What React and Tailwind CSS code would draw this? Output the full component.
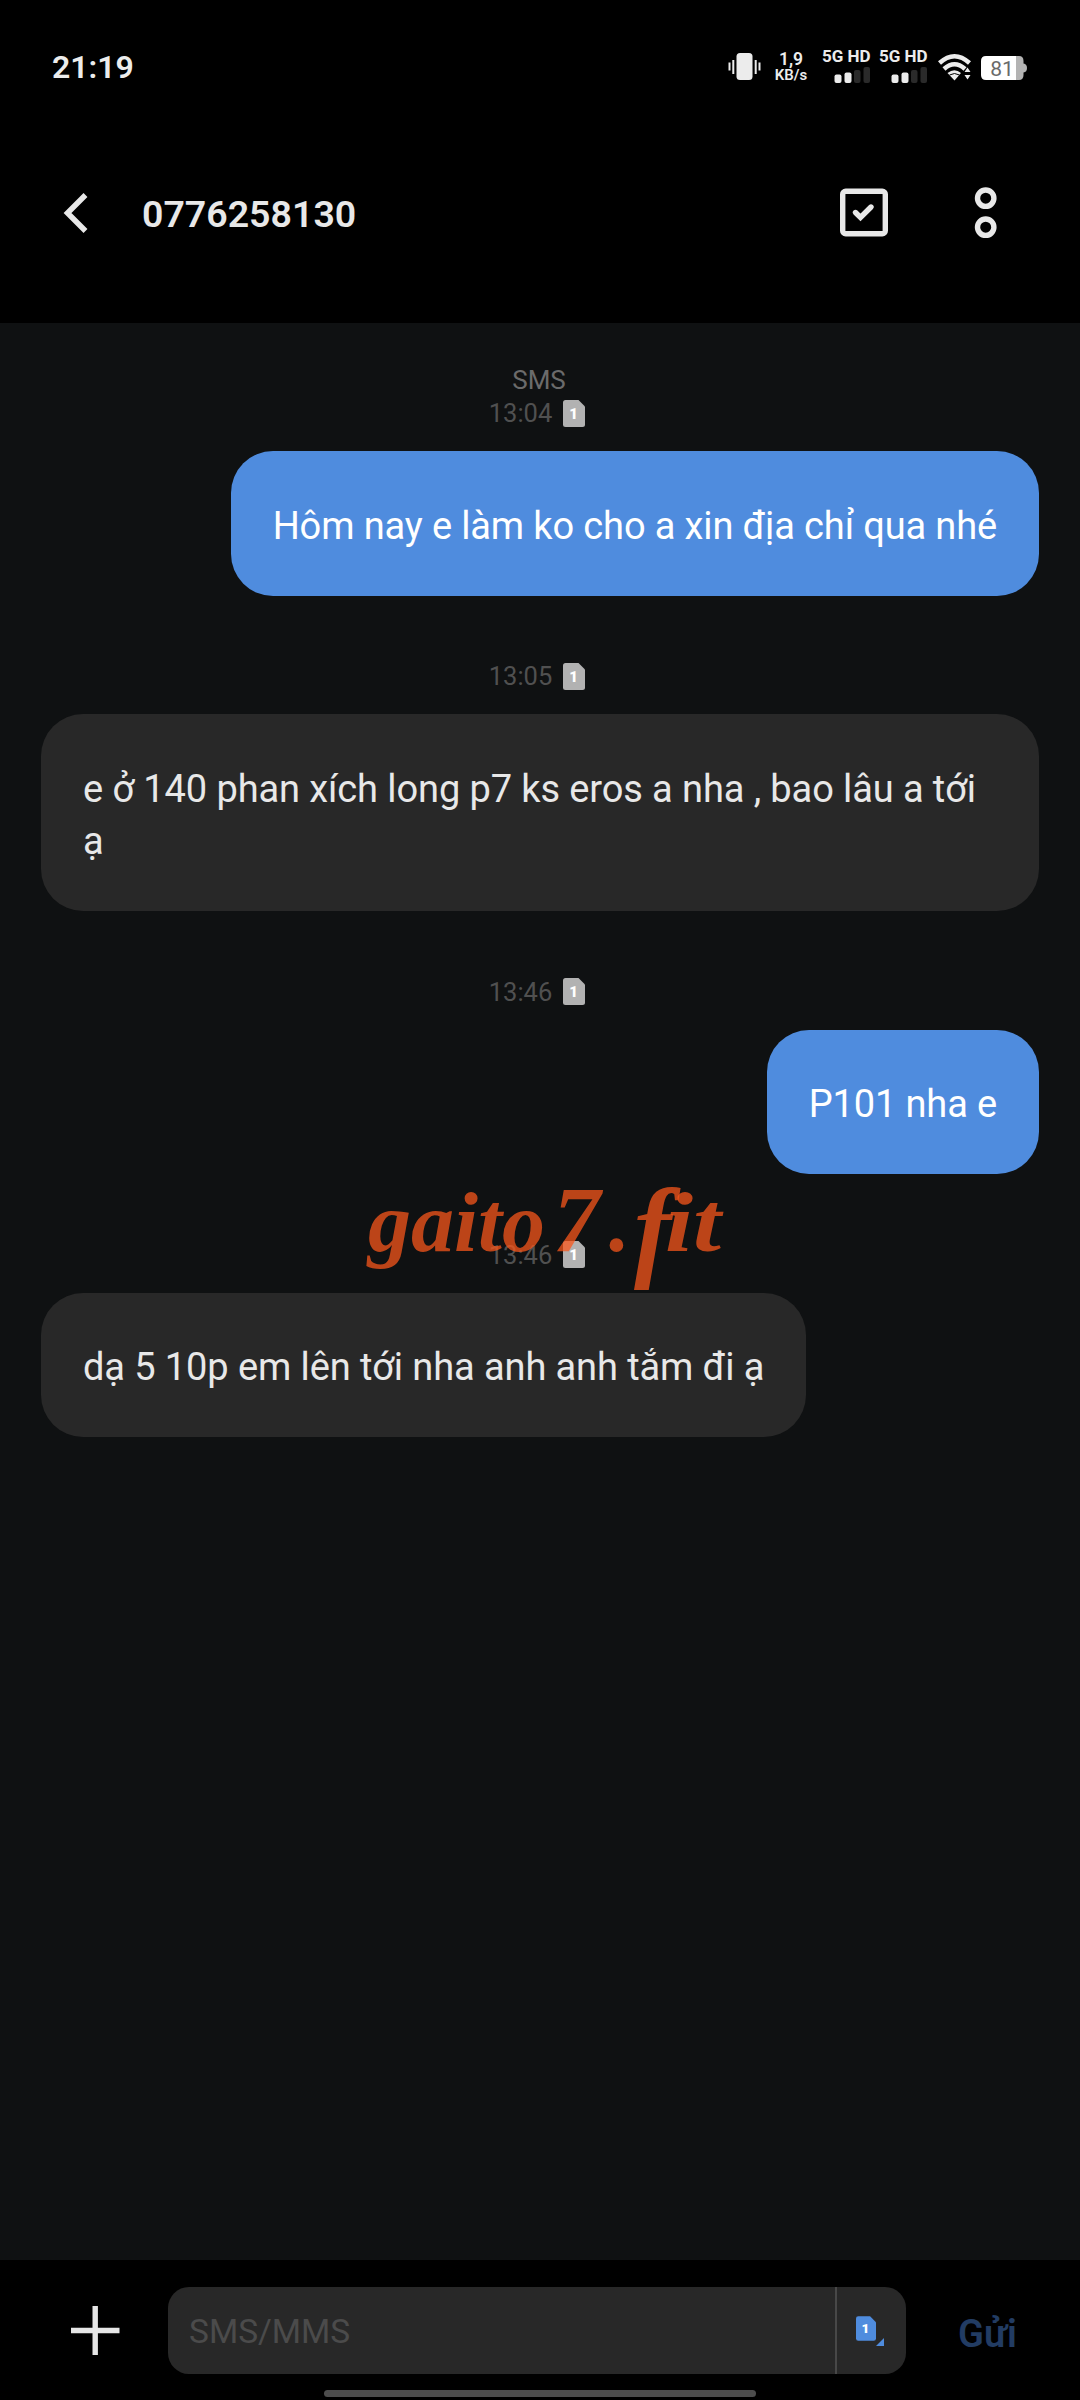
import React from 'react';

const messages = [
  { time: '13:04', label: 'SMS', sent: true, text: 'Hôm nay e làm ko cho a xin địa chỉ qua nhé' },
  { time: '13:05', sent: false, text: 'e ở 140 phan xích long p7 ks eros a nha , bao lâu a tới ạ' },
  { time: '13:46', sent: true, text: 'P101 nha e' },
  { time: '13:46', sent: false, text: 'dạ 5 10p em lên tới nha anh anh tắm đi ạ' },
];

const SimIcon = ({ className }) => (
  <svg viewBox="0 0 22 27" className={className}>
    <path d="M2.5 0H15.5L22 6.5V24.5Q22 27 19.5 27H2.5Q0 27 0 24.5V2.5Q0 0 2.5 0Z" fill="currentColor" />
    <text x="10.5" y="19" fontSize="15" fontWeight="900" textAnchor="middle" fill="#fff">1</text>
  </svg>
);

const Signal = () => (
  <div className="flex w-[49px] flex-col">
    <span className="whitespace-nowrap text-[17px] leading-[20px] font-bold">5G HD</span>
    <svg viewBox="0 0 49 18" className="h-[18px] w-[49px]">
      <rect x="12.5" y="8.5" width="7" height="8.5" rx="2" fill="#ececec" />
      <rect x="22.5" y="6.5" width="7" height="10.5" rx="2" fill="#ececec" />
      <rect x="32" y="4" width="6.5" height="13" rx="2" fill="#2a2a2a" />
      <rect x="41.5" y="1" width="6.5" height="16" rx="2" fill="#2a2a2a" />
    </svg>
  </div>
);

const StatusBar = () => (
  <div className="flex h-[120px] items-start pl-[52px] text-[#ececec]">
    <span className="mt-[48px] text-[32px] leading-[38px] font-semibold">21:19</span>
    <div className="ml-auto flex h-[120px] w-[352px] items-start pt-[46px]">
      <svg viewBox="0 0 34 30" className="mt-[6px] h-[30px] w-[34px]">
        <rect x="8.5" y="1" width="16" height="27" rx="3.5" fill="#ececec" />
        <path d="M1.5 10.5V18.5M5.3 8V22M27.7 8V22M31.5 10.5V18.5" stroke="#ececec" strokeWidth="2" />
      </svg>
      <div className="ml-[11px] flex w-[36px] flex-col items-center font-semibold">
        <span className="mt-[4px] text-[17.5px] leading-[18px]">1,9</span>
        <span className="text-[15px] leading-[15px]">KB/s</span>
      </div>
      <div className="ml-[13px] flex gap-[8px]">
        <Signal />
        <Signal />
      </div>
      <svg viewBox="0 0 34 28" className="ml-[10px] mt-[7px] h-[28px] w-[34px]">
        <path d="M1.5 10Q16.5 -3.5 31.5 10" fill="none" stroke="#ececec" strokeWidth="4.5" />
        <path d="M6 16Q16.5 6.5 27 16" fill="none" stroke="#ececec" strokeWidth="4.5" />
        <path d="M9.5 20Q16.5 14.5 23 20L16.5 27.5Z" fill="#ececec" />
        <path d="M11.5 22Q16.5 19 21.5 22" fill="none" stroke="#000" strokeWidth="1" />
        <path d="M26.5 19L29.5 14.5L32.5 19ZM26.5 22L29.5 26.5L32.5 22Z" fill="#ececec" />
      </svg>
      <svg viewBox="0 0 48 26" className="ml-[8px] mt-[9px] h-[26px] w-[48px]">
        <path d="M36 1H39Q43.5 1 43.5 6V8.5Q47 9 47 13Q47 17 43.5 17.5V20Q43.5 25 39 25H36Z" fill="#b3b3b3" />
        <path d="M6 1H36V25H6Q1 25 1 20V6Q1 1 6 1Z" fill="#fff" />
        <text x="22" y="20.5" fontSize="21" textAnchor="middle" fill="#6a6a6a">81</text>
      </svg>
    </div>
  </div>
);

const Header = () => (
  <div className="flex h-[203px] items-start text-[#e8e8e8]">
    <svg viewBox="0 0 30 46" className="ml-[62px] mt-[70px] h-[46px] w-[30px]">
      <path d="M23.5 5L5.5 23L23.5 41" fill="none" stroke="currentColor" strokeWidth="5.5" />
    </svg>
    <h1 className="ml-[50px] mt-[71px] text-[37.5px] leading-[46px] font-semibold">0776258130</h1>
    <svg viewBox="0 0 50 50" className="ml-auto mt-[68px] h-[50px] w-[50px]">
      <rect x="3.7" y="3.2" width="42.6" height="42.6" rx="3" fill="none" stroke="currentColor" strokeWidth="5.4" />
      <path d="M16.5 24.5L21.5 29.5L32 19" fill="none" stroke="currentColor" strokeWidth="5.4" strokeLinecap="round" />
    </svg>
    <svg viewBox="0 0 24 54" className="ml-[85px] mr-[82px] mt-[66px] h-[54px] w-[24px]">
      <circle cx="11.7" cy="12.2" r="8.2" fill="none" stroke="currentColor" strokeWidth="5.4" />
      <circle cx="11.7" cy="41.2" r="8.2" fill="none" stroke="currentColor" strokeWidth="5.4" />
    </svg>
  </div>
);

const Message = ({ message }) => (
  <div className="flex flex-col">
    {message.label && (
      <div className="-mt-[33px] mb-[-1px] pr-[2px] text-center text-[26px] leading-[34px] text-[#6b6b6b]">{message.label}</div>
    )}
    <div className="mb-[21px] flex h-[34px] items-center justify-center gap-[11px] pr-[6px]">
      <span className="text-[25.5px] leading-[34px] text-[#505050]">{message.time}</span>
      <SimIcon className="h-[27px] w-[22px] text-[#b2b2b2]" />
    </div>
    <div
      className={
        message.sent
          ? 'max-w-[998px] self-end rounded-[42px] bg-[#4f8cde] px-[42px] pb-[43.5px] pt-[48.5px] text-[38px] leading-[52.5px] tracking-[-0.13px] text-white'
          : 'max-w-[998px] self-start rounded-[42px] bg-[#282828] px-[42px] pb-[43.5px] pt-[48.5px] text-[38px] leading-[52.5px] tracking-[-0.1px] text-[#e8e8e8]'
      }
    >
      {message.text}
    </div>
  </div>
);

const Watermark = () => (
  <svg viewBox="0 0 380 130" className="absolute left-[355px] top-[1175px] h-[130px] w-[380px] overflow-visible">
    <g fill="#f9561b" fillOpacity="0.74" fontFamily="'Liberation Serif', serif" fontWeight="700" fontStyle="italic">
      <text x="13" y="76" fontSize="85" textLength="177" lengthAdjust="spacingAndGlyphs">gaito</text>
      <text x="198" y="76" fontSize="94">7</text>
      <text x="254" y="76" fontSize="84">.</text>
      <text x="279" y="91" fontSize="112">f</text>
      <text x="310" y="76" fontSize="85" textLength="56" lengthAdjust="spacingAndGlyphs">it</text>
    </g>
  </svg>
);

const Composer = () => (
  <div className="flex h-[140px] flex-col bg-black">
    <div className="flex h-[130px] items-start pt-[27px]">
      <svg viewBox="0 0 50 50" className="ml-[70px] mt-[18px] h-[50px] w-[50px]">
        <path d="M1 25.5H49.5M25.2 1V50" stroke="#e6e6e6" strokeWidth="5.4" />
      </svg>
      <div className="ml-[48px] flex h-[87px] w-[738px] overflow-hidden rounded-[21px] bg-[#282828]">
        <span className="w-[667px] pl-[21px] pt-[24px] text-[33.5px] leading-[42px] text-[#4b4b4b]">SMS/MMS</span>
        <div className="flex flex-1 items-start border-l-2 border-[#484848]">
          <SimIcon className="ml-[19px] mt-[29px] h-[25px] w-[20px] text-[#4f8cde]" />
          <svg viewBox="0 0 8 8" className="mt-[51px] h-[8px] w-[8px]">
            <path d="M8 0V8H0Z" fill="#4f8cde" />
          </svg>
        </div>
      </div>
      <span className="ml-[52px] mt-[24px] text-[38px] leading-[46px] font-semibold text-[#223c63]">Gửi</span>
    </div>
    <div className="mx-auto h-[7px] w-[432px] rounded-full bg-[#4d4d4d]" />
  </div>
);

export default function App() {
  return (
    <div className="relative flex h-[2400px] w-[1080px] flex-col overflow-hidden bg-black font-['Roboto',sans-serif]">
      <StatusBar />
      <Header />
      <div className="flex flex-1 flex-col gap-[63.5px] bg-[#0f1112] px-[41px] pt-[73px]">
        {messages.map((message, i) => (
          <Message key={i} message={message} />
        ))}
      </div>
      <Composer />
      <Watermark />
    </div>
  );
}
